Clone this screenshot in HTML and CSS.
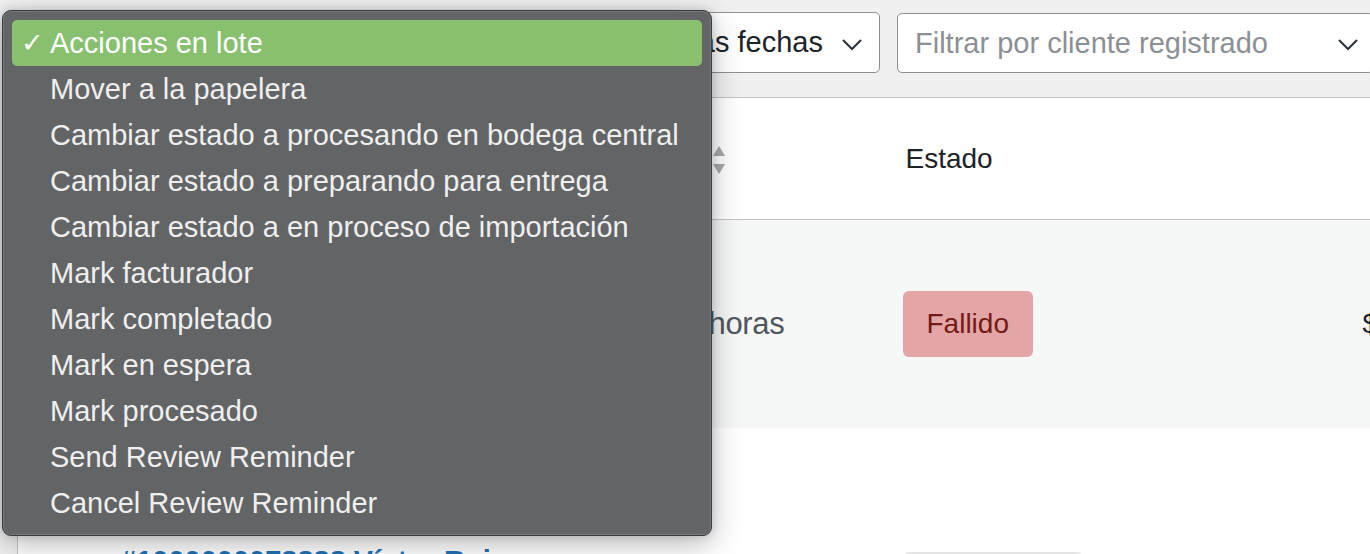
FILE: index.html
```html
<!DOCTYPE html>
<html lang="es">
<head>
    <meta charset='utf-8'>
    <meta name="viewport" content="width=device-width, initial-scale=1">
    <title>Pedidos</title>
    <link rel="stylesheet" href="styles.css">
</head>
<body>

<div class="tablenav">
    <div class="select select-date">
        <span>Todas las fechas</span>
        <svg class="chevron" viewBox="0 0 20 20"><path d="M1 6l9 9 9-9" /></svg>
    </div>
    <div class="select select-customer">
        <span class="placeholder">Filtrar por cliente registrado</span>
        <svg class="chevron" viewBox="0 0 20 20"><path d="M1 6l9 9 9-9" /></svg>
    </div>
</div>

<table class="orders">
    <colgroup>
        <col class="col-order">
        <col class="col-date">
        <col class="col-status">
        <col class="col-total">
    </colgroup>
    <thead>
        <tr>
            <th></th>
            <th class="th-date">
                <span class="sort">
                    <svg viewBox="0 0 12 28"><path d="M6 0l6 10H0z" /><path d="M6 28l6-10H0z" /></svg>
                </span>
            </th>
            <th>Estado</th>
            <th class="th-total">Total</th>
        </tr>
    </thead>
    <tbody>
        <tr class="alt">
            <td></td>
            <td class="muted">horas</td>
            <td><mark class="status failed">Fallido</mark></td>
            <td>$129.900</td>
        </tr>
        <tr class="second">
            <td class="order-cell"><a href="#">#1000000078888 Víctor Rojas</a></td>
            <td class="muted date-low">hace 12 horas</td>
            <td><mark class="status on-hold">En espera</mark></td>
            <td class="date-low">$89.500</td>
        </tr>
    </tbody>
</table>

<div class="bulk-menu">
    <div class="item selected"><span class="check">✓</span>Acciones en lote</div>
    <div class="item">Mover a la papelera</div>
    <div class="item">Cambiar estado a procesando en bodega central</div>
    <div class="item">Cambiar estado a preparando para entrega</div>
    <div class="item">Cambiar estado a en proceso de importación</div>
    <div class="item">Mark facturador</div>
    <div class="item">Mark completado</div>
    <div class="item">Mark en espera</div>
    <div class="item">Mark procesado</div>
    <div class="item">Send Review Reminder</div>
    <div class="item">Cancel Review Reminder</div>
</div>

</body>
</html>
```

FILE: styles.css
```css
html, body {
    margin: 0;
    height: 100%;
}

body {
    background: #f0f0f1;
    font-family: "Liberation Sans", Arial, sans-serif;
    color: #1d2327;
    overflow: hidden;
    position: relative;
    width: 1370px;
}

/* filter bar */
.tablenav {
    display: flex;
    gap: 17px;
    padding: 12px 0 0 560px;
    height: 61px;
}

.select {
    box-sizing: border-box;
    height: 61px;
    background: #fff;
    border: 1px solid #8c8f94;
    border-radius: 5px;
    display: flex;
    align-items: center;
    font-size: 29px;
    white-space: nowrap;
    flex-shrink: 0;
}

.select-date {
    width: 320px;
    justify-content: flex-end;
    gap: 19px;
    padding-right: 17px;
}

.select-customer {
    width: 477px;
    height: 60px;
    margin-top: 1px;
    justify-content: space-between;
    padding: 0 15px 0 17px;
}

.select .placeholder {
    color: #8c8f94;
}

.chevron {
    width: 20px;
    height: 20px;
    fill: none;
    stroke: #2c3338;
    stroke-width: 2;
    margin-top: 2px;
}

/* orders table */
.orders {
    margin: 24px 0 0 17px;
    width: 1420px;
    border-collapse: collapse;
    table-layout: fixed;
    background: #fff;
    border-top: 1px solid #c3c4c7;
    border-left: 1px solid #c3c4c7;
    font-size: 28px;
}

.col-order { width: 568px; }
.col-date { width: 304px; }
.col-status { width: 457px; }
.col-total { width: 91px; }

.orders th {
    height: 121px;
    text-align: left;
    font-weight: normal;
    padding: 0 16px;
    border-bottom: 1px solid #c3c4c7;
    white-space: nowrap;
}

.orders th.th-date {
    text-align: right;
    padding-right: 165px;
}

.orders th.th-total {
    text-align: right;
    color: transparent;
}

.orders th .sort {
    display: inline-block;
    vertical-align: middle;
}

.orders th .sort svg {
    width: 12px;
    height: 28px;
    fill: #a7aaad;
    display: block;
}

.orders td {
    padding: 0 16px;
    white-space: nowrap;
    vertical-align: middle;
}

.orders tr.alt td {
    background: #f6f7f7;
    height: 208px;
}

.orders tr.alt td.muted {
    text-align: right;
    padding-right: 105px;
    font-size: 31px;
    letter-spacing: -0.3px;
}

.orders tr.second td {
    height: 300px;
    vertical-align: top;
    padding-top: 108px;
}

.orders tr.second td.order-cell {
    padding-top: 117px;
}

.orders tr.second td.date-low {
    padding-top: 190px;
}

.orders a {
    color: #2271b1;
    text-decoration: none;
    font-weight: bold;
    font-size: 29px;
    padding-left: 86px;
}

.orders .muted {
    color: #50575e;
}

.status {
    display: inline-block;
    margin-left: -3px;
    padding: 0 24px;
    line-height: 66px;
    border-radius: 6px;
    background: #e5e5e5;
    color: #454545;
}

.status.failed {
    background: #e3a5a5;
    color: #761919;
    width: 82px;
}

.orders tr.second .status {
    margin-top: 16px;
    width: 132px;
}

/* native bulk actions popup */
.bulk-menu {
    position: absolute;
    top: 10px;
    left: 2px;
    width: 710px;
    height: 526px;
    box-sizing: border-box;
    padding: 9px 9px;
    background: #636466;
    border: 1px solid #3a3b3d;
    border-radius: 9px;
    box-shadow: inset 0 0 0 1px #77787a, 0 8px 30px rgba(0, 0, 0, 0.28), 0 0 8px rgba(0, 0, 0, 0.15);
    color: #efefef;
    font-size: 29px;
}

.bulk-menu .item {
    position: relative;
    height: 46px;
    line-height: 47px;
    padding-left: 38px;
    border-radius: 5px;
    white-space: nowrap;
}

.bulk-menu .item.selected {
    background: #88c070;
    color: #fff;
}

.bulk-menu .check {
    position: absolute;
    left: 9px;
    font-size: 27px;
}
```
